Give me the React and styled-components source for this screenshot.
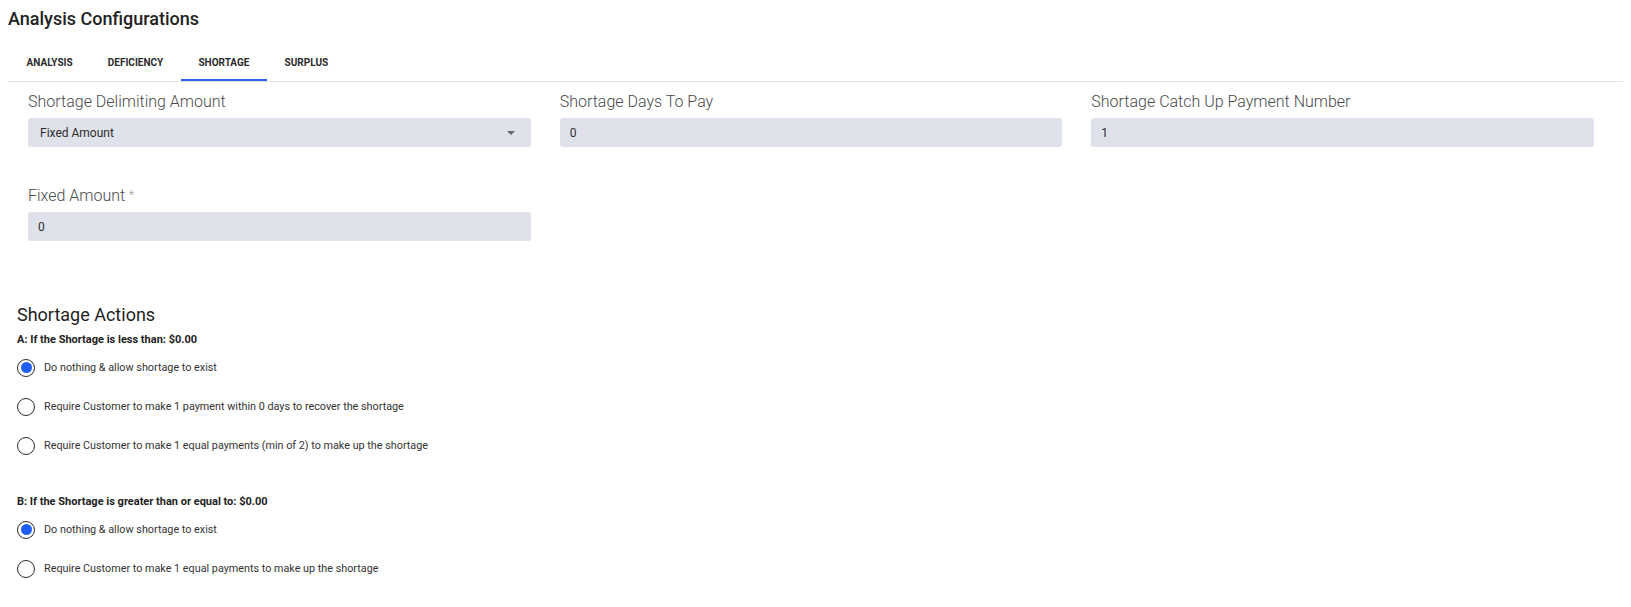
import React, { useState } from "react";
import styled, { createGlobalStyle } from "styled-components";

const GlobalStyle = createGlobalStyle`
  body {
    margin: 8px;
    background: #fff;
    font-family: Roboto, "Liberation Sans", Arial, sans-serif;
    color: #222;
  }
`;

const tabs = ["Analysis", "Deficiency", "Shortage", "Surplus"];

const groupA = [
  "Do nothing & allow shortage to exist",
  "Require Customer to make 1 payment within 0 days to recover the shortage",
  "Require Customer to make 1 equal payments (min of 2) to make up the shortage",
];

const groupB = [
  "Do nothing & allow shortage to exist",
  "Require Customer to make 1 equal payments to make up the shortage",
];

const App = () => {
  const [active, setActive] = useState("Shortage");
  const [choiceA, setChoiceA] = useState(0);
  const [choiceB, setChoiceB] = useState(0);

  return (
    <Page>
      <GlobalStyle />
      <Title>Analysis Configurations</Title>
      <TabBar>
        {tabs.map((t) => (
          <Tab key={t} $active={t === active} onClick={() => setActive(t)}>
            {t}
          </Tab>
        ))}
      </TabBar>

      <FieldGrid>
        <Field>
          <Label>Shortage Delimiting Amount</Label>
          <SelectBox>
            Fixed Amount
            <Caret />
          </SelectBox>
        </Field>
        <Field>
          <Label>Shortage Days To Pay</Label>
          <InputBox>0</InputBox>
        </Field>
        <Field>
          <Label>Shortage Catch Up Payment Number</Label>
          <InputBox>1</InputBox>
        </Field>
      </FieldGrid>

      <FieldGrid $second>
        <Field>
          <Label>
            Fixed Amount <Required>*</Required>
          </Label>
          <InputBox>0</InputBox>
        </Field>
      </FieldGrid>

      <Actions>
        <SectionTitle>Shortage Actions</SectionTitle>
        <Group>
          <GroupHeading>A: If the Shortage is less than: $0.00</GroupHeading>
          {groupA.map((text, i) => (
            <RadioRow key={i} onClick={() => setChoiceA(i)}>
              <RadioCircle $checked={choiceA === i} />
              {text}
            </RadioRow>
          ))}
        </Group>
        <Group $spaced>
          <GroupHeading>B: If the Shortage is greater than or equal to: $0.00</GroupHeading>
          {groupB.map((text, i) => (
            <RadioRow key={i} onClick={() => setChoiceB(i)}>
              <RadioCircle $checked={choiceB === i} />
              {text}
            </RadioRow>
          ))}
        </Group>
      </Actions>
    </Page>
  );
};

const Page = styled.div`
  display: flex;
  flex-direction: column;
`;

const Title = styled.h1`
  margin: 0;
  font-size: 18px;
  line-height: 22px;
  font-weight: 500;
  color: #222;
`;

const TabBar = styled.nav`
  display: flex;
  margin-top: 13px;
  padding-left: 1px;
  border-bottom: 1px solid #e2e2e2;
`;

const Tab = styled.button`
  height: 38px;
  padding: 2px 17.6px 0;
  background: none;
  border: none;
  border-bottom: 2px solid ${(p) => (p.$active ? "#2a66f2" : "transparent")};
  font-family: Roboto, "Liberation Sans", Arial, sans-serif;
  font-size: 10px;
  font-weight: 700;
  text-transform: uppercase;
  color: #2b2b2b;
  cursor: pointer;
`;

const FieldGrid = styled.div`
  display: grid;
  grid-template-columns: repeat(3, 1fr);
  column-gap: 29px;
  padding: 0 29px 0 20px;
  margin-top: ${(p) => (p.$second ? "39px" : "10px")};
`;

const Field = styled.div`
  display: flex;
  flex-direction: column;
  gap: 7px;
`;

const Label = styled.label`
  font-size: 16px;
  line-height: 19px;
  font-weight: 300;
  color: #4a4a4a;
`;

const Required = styled.span`
  font-size: 12px;
  color: #9a9a9a;
  vertical-align: top;
`;

const InputBox = styled.div`
  display: flex;
  align-items: center;
  height: 29px;
  padding: 0 10px;
  background: #dfe2ea;
  border-radius: 3px;
  font-size: 12px;
  color: #2b2b2b;
`;

const SelectBox = styled(InputBox)`
  justify-content: space-between;
  padding: 0 16px 0 12px;
`;

const Caret = styled.span`
  width: 0;
  height: 0;
  border-left: 4px solid transparent;
  border-right: 4px solid transparent;
  border-top: 4px solid #666;
`;

const Actions = styled.section`
  display: flex;
  flex-direction: column;
  margin-top: 63px;
  padding-left: 9px;
`;

const SectionTitle = styled.h2`
  margin: 0 0 7px;
  font-size: 18px;
  line-height: 22px;
  font-weight: 400;
  color: #1e1e1e;
`;

const Group = styled.div`
  display: flex;
  flex-direction: column;
  margin-top: ${(p) => (p.$spaced ? "30px" : "0")};
`;

const GroupHeading = styled.div`
  font-size: 11px;
  line-height: 14px;
  font-weight: 700;
  color: #222;
  margin-bottom: 1px;
`;

const RadioRow = styled.label`
  display: flex;
  align-items: center;
  gap: 9px;
  height: 39px;
  font-size: 10.8px;
  color: #333;
  cursor: pointer;
`;

const RadioCircle = styled.span`
  position: relative;
  flex: none;
  width: 18px;
  height: 18px;
  box-sizing: border-box;
  border: 1.5px solid #2d2d2d;
  border-radius: 50%;

  &::after {
    content: "";
    position: absolute;
    inset: 2.5px;
    border-radius: 50%;
    background: ${(p) => (p.$checked ? "#1f5ef5" : "transparent")};
  }
`;

export default App;
